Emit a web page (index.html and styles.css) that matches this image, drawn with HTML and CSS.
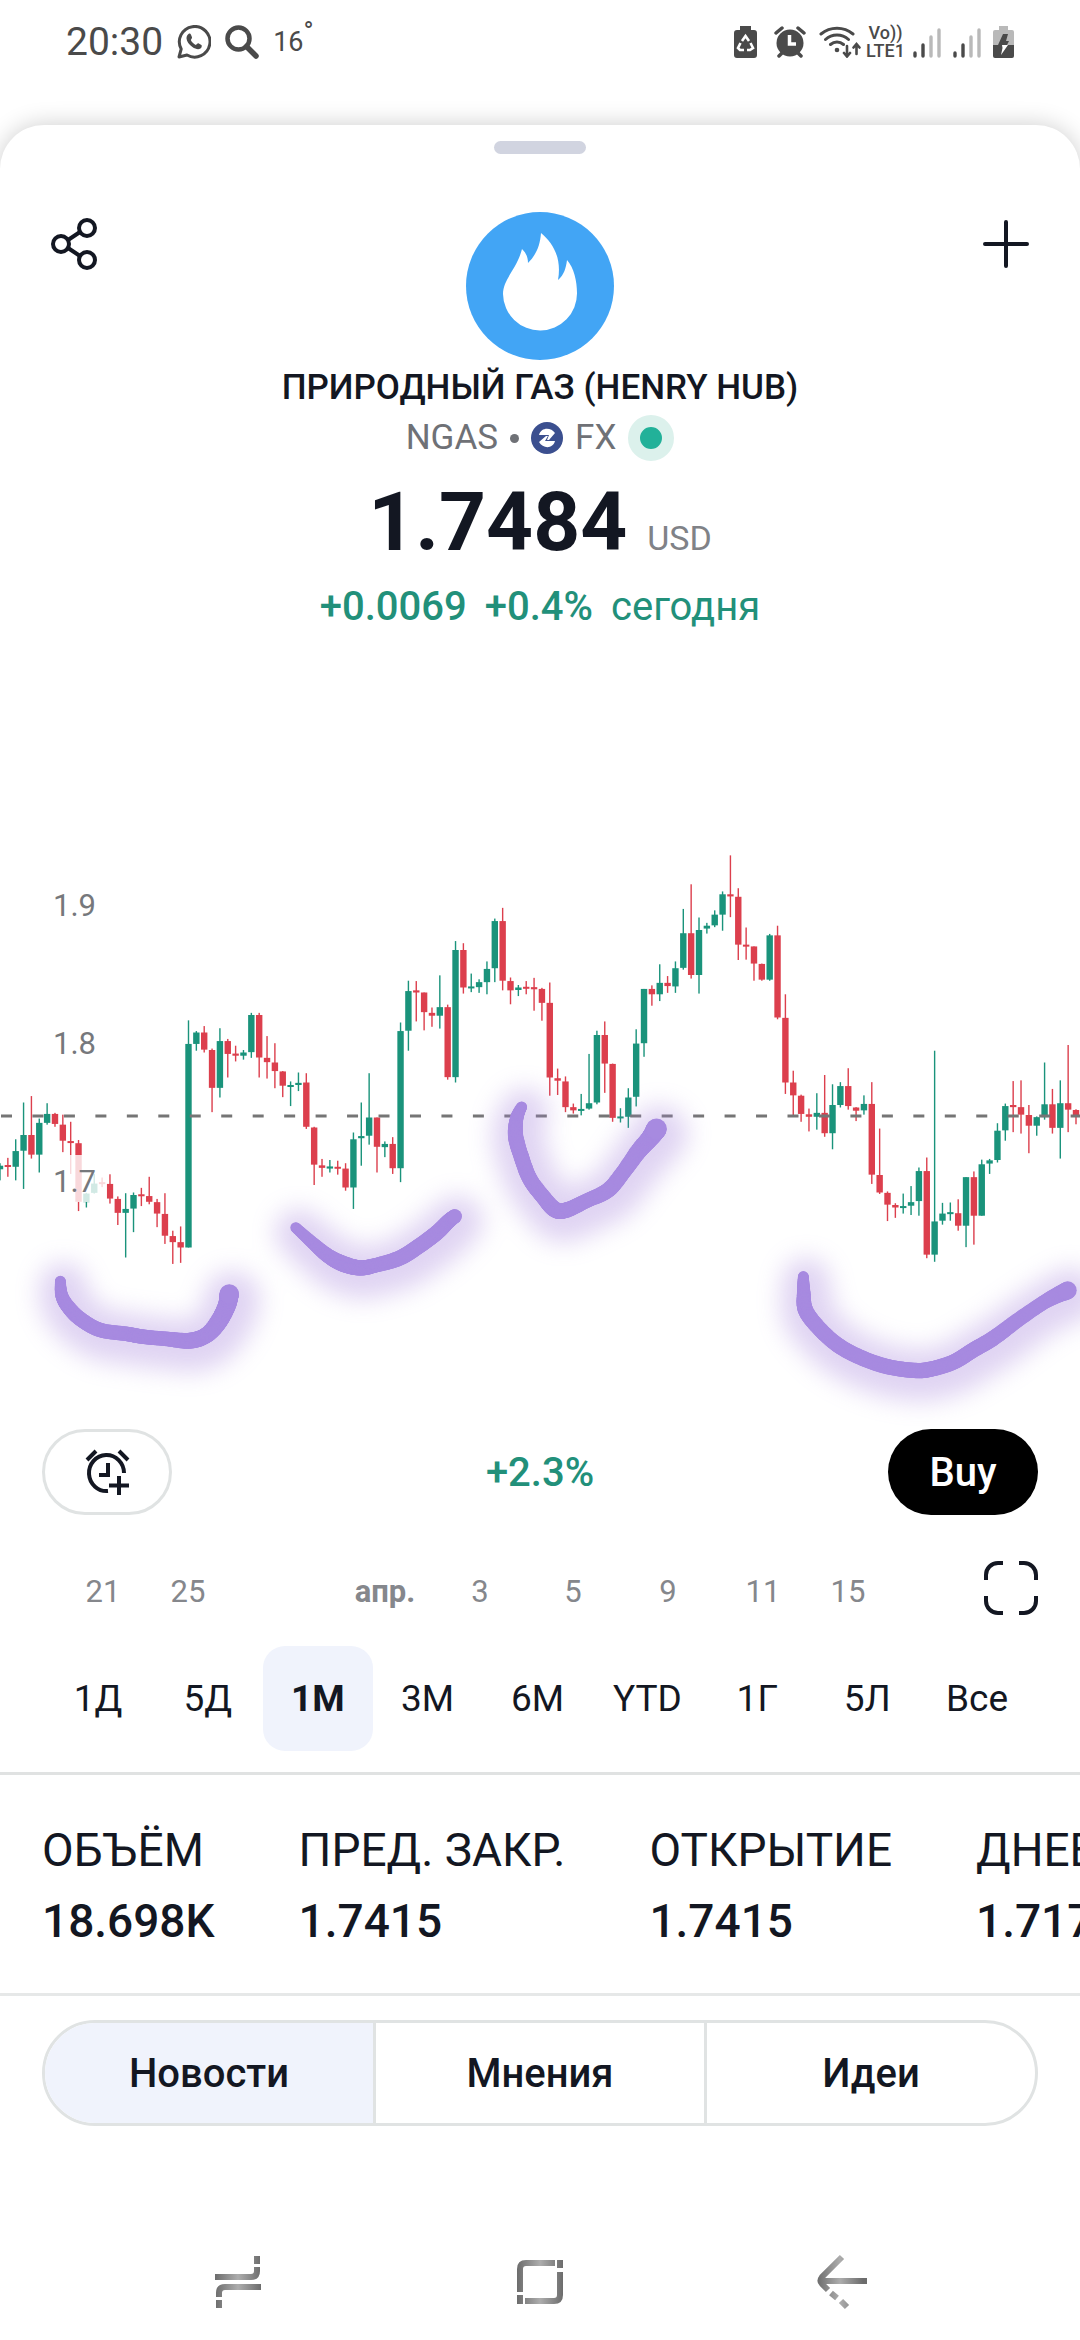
FILE: index.html
```html
<!DOCTYPE html>
<html lang="ru">
<head>
    <meta charset="UTF-8">
    <meta name="viewport" content="width=device-width, initial-scale=1.0">
    <title>NGAS 1.7484</title>
    <link rel="stylesheet" href="styles.css">
</head>
<body>
    <div class="status-bar">
        <div class="status-left">
            <span class="clock">20:30</span>
            <svg width="34" height="34" viewBox="0 0 34 34" fill="none">
                <path d="M2 32l2.200-8A15.300 15.300 0 1 1 10 30z" stroke="#4a4a4a" stroke-width="3" stroke-linejoin="round"/>
                <path d="M11.500 9c1-.8 2-.4 2.500.8l1 2.500c.3 1-1 2-1.200 2.800.8 2 2.800 4 5 4.800.9-.3 1.700-1.900 2.600-1.600l3 1.600c1 .6 0 3-1 3.700-2 1.200-5 .6-8-1.500-3.500-2.600-5.600-5.600-5.900-8.600-.1-2 .9-3.700 2-4.500z" fill="#4a4a4a"/>
            </svg>
            <svg width="34" height="34" viewBox="0 0 34 34" fill="none" stroke="#4a4a4a">
                <circle cx="13.500" cy="13.500" r="11" stroke-width="4.500"/>
                <path d="M21.500 21.500L31 31" stroke-width="5.500" stroke-linecap="round"/>
            </svg>
            <span class="temp">16<sup>°</sup></span>
        </div>
        <div class="status-right">
            <svg class="saver" width="23" height="32" viewBox="0 0 23 32">
                <path d="M6 0h11v4h3a3 3 0 0 1 3 3v22a3 3 0 0 1-3 3H3a3 3 0 0 1-3-3V7a3 3 0 0 1 3-3h3z" fill="#4a4a4a"/>
                <path d="M8 15l3.500-5 3.500 5M16.500 17l2.500 5-3 2h-3M10 24H6l-2-2 2.500-5" fill="none" stroke="#fff" stroke-width="2.600"/>
            </svg>
            <svg class="alarm" width="32" height="32" viewBox="0 0 32 32">
                <circle cx="16" cy="17" r="13.500" fill="#4a4a4a"/>
                <path d="M2 7l6-5M30 7l-6-5M5 30l4-4M27 30l-4-4" stroke="#4a4a4a" stroke-width="3.500" stroke-linecap="round"/>
                <path d="M15.500 9v9H22" fill="none" stroke="#fff" stroke-width="3.500"/>
            </svg>
            <svg class="wifi" width="42" height="32" viewBox="0 0 42 32" fill="none" stroke="#4a4a4a" stroke-width="3" stroke-linecap="round">
                <path d="M2 8a25 25 0 0 1 32 0M6.500 13.500a17 17 0 0 1 23 0M11.500 18.500a10 10 0 0 1 13 0"/>
                <circle cx="18" cy="24" r="2.300" fill="#4a4a4a" stroke="none"/>
                <path d="M28 20v10M25 27l3 3.500 3-3.500M37.500 28V18.500M34.500 21.500l3-3.500 3 3.500" stroke-width="2.600"/>
            </svg>
            <span class="volte"><span>Vo))</span><span>LTE1</span></span>
            <svg class="signal" width="28" height="32" viewBox="0 0 28 32" stroke-width="3.400" stroke-linecap="round">
                <path d="M2 27v3M10 19v11" stroke="#4a4a4a"/>
                <path d="M18 11v19M26 4v26" stroke="#b9b9b9"/>
            </svg>
            <svg class="signal" width="28" height="32" viewBox="0 0 28 32" stroke-width="3.400" stroke-linecap="round">
                <path d="M2 27v3M10 19v11" stroke="#4a4a4a"/>
                <path d="M18 11v19M26 4v26" stroke="#b9b9b9"/>
            </svg>
            <svg width="21" height="32" viewBox="0 0 21 32">
                <path d="M6 0h9v4h4a2 2 0 0 1 2 2v13H0V6a2 2 0 0 1 2-2h4z" fill="#b9b9b9"/>
                <path d="M0 19h21v11a2 2 0 0 1-2 2H2a2 2 0 0 1-2-2z" fill="#4a4a4a"/>
                <path d="M10 8h5l-2 7h3l-2 4H5z" fill="#4a4a4a"/>
                <path d="M9 19h6L8 29l1.500-7z" fill="#fff"/>
            </svg>
        </div>
    </div>

    <main class="sheet">
        <div class="handle"></div>

        <header class="sheet-header">
            <button class="icon-btn" type="button" aria-label="Поделиться">
                <svg width="46" height="52" viewBox="0 0 46 52" fill="none" stroke="#131722" stroke-width="4">
                    <circle cx="10" cy="26" r="8"/>
                    <circle cx="36" cy="10" r="8"/>
                    <circle cx="36" cy="42" r="8"/>
                    <path d="M17 22l12-8M17 30l12 8"/>
                </svg>
            </button>
            <svg class="logo" width="148" height="148" viewBox="0 0 148 148">
                <circle cx="74" cy="74" r="74" fill="#42a5f5"/>
                <path d="M75 21c12 10 21 25 17 47 6-5 8-12 9-20 7 8 10 21 10 33a37 37 0 0 1-74 1c0-15 14-25 19-45 4 4 6 8 6 14 8-8 12-17 13-30z" fill="#fff"/>
            </svg>
            <button class="icon-btn" type="button" aria-label="Добавить">
                <svg width="46" height="48" viewBox="0 0 46 48" stroke="#131722" stroke-width="4" stroke-linecap="round">
                    <path d="M23 2v44M2 24h42"/>
                </svg>
            </button>
        </header>

        <section class="quote">
            <h1>ПРИРОДНЫЙ ГАЗ (HENRY HUB)</h1>
            <div class="ticker">
                <span>NGAS</span>
                <span class="bullet"></span>
                <svg width="32" height="32" viewBox="0 0 32 32">
                    <circle cx="16" cy="16" r="16" fill="#3b4f8f"/>
                    <path d="M8 13C10 5 20 5 24 11l-6 7h-2l2-5z" fill="#fff"/>
                    <path d="M24 19C22 27 12 27 8 20l7-6h2l-3 5z" fill="#fff"/>
                </svg>
                <span>FX</span>
                <span class="market-dot"></span>
            </div>
            <div class="price">
                <strong>1.7484</strong>
                <span class="currency">USD</span>
            </div>
            <div class="change">
                <b>+0.0069</b>
                <b>+0.4%</b>
                <span>сегодня</span>
            </div>
        </section>

        <svg class="chart" id="chart" viewBox="0 0 1080 589">
            <defs>
                <filter id="glow" filterUnits="userSpaceOnUse" x="-100" y="100" width="1300" height="560">
                    <feGaussianBlur stdDeviation="12"/>
                </filter>
            </defs>
            <g id="candles"></g>
            <line class="price-line" x1="1" y1="276" x2="1080" y2="276"/>
            <rect class="label-bg" x="50" y="315" width="57" height="47"/>
            <text class="scale" x="53" y="76">1.9</text>
            <text class="scale" x="53" y="214">1.8</text>
            <text class="scale" x="53" y="352">1.7</text>
            <g id="marker-glow" filter="url(#glow)"></g>
            <g id="marker"></g>
        </svg>

        <div class="actions">
            <button class="alert-btn" type="button" aria-label="Создать оповещение">
                <svg width="45" height="46" viewBox="0 0 45 46" fill="none" stroke="#131722" stroke-width="4">
                    <path d="M23 42A17.500 18 0 1 1 39 24"/>
                    <path d="M23 14v12h-9M34 27v19M24 36.500h20M2 11l9-9M43 11l-9-9"/>
                </svg>
            </button>
            <span class="period-change">+2.3%</span>
            <button class="buy-btn" type="button">Buy</button>
        </div>

        <div class="axis-row">
            <svg class="axis" viewBox="0 0 984 54">
                <text x="103" y="41">21</text>
                <text x="188" y="41">25</text>
                <text class="month" x="385" y="41">апр.</text>
                <text x="480" y="41">3</text>
                <text x="573" y="41">5</text>
                <text x="668" y="41">9</text>
                <text x="763" y="41">11</text>
                <text x="848" y="41">15</text>
            </svg>
            <button class="fullscreen-btn" type="button" aria-label="На весь экран">
                <svg width="54" height="54" viewBox="0 0 54 54" fill="none" stroke="#131722" stroke-width="4">
                    <path d="M2 19v-5A12 12 0 0 1 14 2h5M35 2h5a12 12 0 0 1 12 12v5M52 35v5a12 12 0 0 1-12 12h-5M19 52h-5A12 12 0 0 1 2 40v-5"/>
                </svg>
            </button>
        </div>

        <div class="ranges">
            <button type="button">1Д</button>
            <button type="button">5Д</button>
            <button type="button" class="active">1М</button>
            <button type="button">3М</button>
            <button type="button">6М</button>
            <button type="button">YTD</button>
            <button type="button">1Г</button>
            <button type="button">5Л</button>
            <button type="button">Все</button>
        </div>

        <dl class="stats">
            <div class="stat"><dt>ОБЪЁМ</dt><dd>18.698K</dd></div>
            <div class="stat"><dt>ПРЕД. ЗАКР.</dt><dd>1.7415</dd></div>
            <div class="stat"><dt>ОТКРЫТИЕ</dt><dd>1.7415</dd></div>
            <div class="stat"><dt>ДНЕВНОЙ ДИАПАЗОН</dt><dd>1.7170</dd></div>
        </dl>

        <div class="tabs">
            <button type="button" class="active">Новости</button>
            <button type="button">Мнения</button>
            <button type="button">Идеи</button>
        </div>

        <nav class="nav-bar">
            <button type="button" aria-label="Последние">
                <svg width="46" height="52" viewBox="0 0 46 52" fill="none" stroke="url(#metal)" stroke-width="6">
                    <defs>
                        <linearGradient id="metal" gradientUnits="userSpaceOnUse" x1="0" y1="0" x2="46" y2="0">
                            <stop offset="0" stop-color="#6c6c6c"/>
                            <stop offset="0.500" stop-color="#adadad"/>
                            <stop offset="1" stop-color="#6c6c6c"/>
                        </linearGradient>
                    </defs>
                    <path d="M42 0v8M42 11v4q0 6-6 6H0M46 31H10q-6 0-6 6v4M4 44v8"/>
                </svg>
            </button>
            <button type="button" aria-label="Домой">
                <svg width="46" height="44" viewBox="0 0 46 44" fill="none" stroke="url(#metal)" stroke-width="6">
                    <path d="M3 32V9q0-6 6-6h29M40 3h6M43 0v8M43 12v23q0 6-6 6H8M3 35v9"/>
                </svg>
            </button>
            <button type="button" aria-label="Назад">
                <svg width="50" height="56" viewBox="0 0 50 56" fill="none" stroke="url(#metal)" stroke-width="6">
                    <path d="M25 3L5 23q-3 4 0 7l6 6M6 27h44M14 39l6 5M24 47l6 6"/>
                </svg>
            </button>
        </nav>
    </main>
    <script src="chart.js"></script>
</body>
</html>
```

FILE: styles.css
```css
* {
    margin: 0;
    padding: 0;
    box-sizing: border-box;
}

body {
    font-family: Roboto, "Noto Sans", sans-serif;
    background-color: #ffffff;
    color: #131722;
    min-height: 100vh;
    display: flex;
    flex-direction: column;
    overflow-x: hidden;
}

svg {
    display: block;
    flex-shrink: 0;
}

button {
    font-family: inherit;
    color: inherit;
    background: none;
    border: none;
    cursor: pointer;
}

/* status bar */

.status-bar {
    display: flex;
    justify-content: space-between;
    align-items: center;
    height: 84px;
    padding: 0 66px;
    color: #4a4a4a;
}

.status-left,
.status-right {
    display: flex;
    align-items: center;
}

.status-left {
    gap: 14px;
}

.clock {
    font-size: 39px;
}

.temp {
    font-size: 27px;
}

.temp sup {
    font-size: 27px;
    line-height: 0;
}

.saver {
    margin-right: 17px;
}

.alarm {
    margin-right: 13px;
}

.wifi {
    margin-right: 5px;
}

.volte {
    display: flex;
    flex-direction: column;
    align-items: center;
    width: 39px;
    margin-right: 8px;
    font-size: 18px;
    line-height: 18px;
    font-weight: 500;
}

.signal {
    margin-right: 12px;
}

/* sheet */

.sheet {
    flex: 1;
    display: flex;
    flex-direction: column;
    margin-top: 41px;
    padding-top: 16px;
    background: #ffffff;
    border-radius: 44px 44px 0 0;
    box-shadow: 0 0 24px rgba(0, 0, 0, 0.2);
}

.handle {
    width: 92px;
    height: 13px;
    margin: 0 auto;
    border-radius: 7px;
    background: #d1d4e0;
}

.sheet-header {
    display: flex;
    justify-content: space-between;
    align-items: flex-start;
    padding: 58px 42px 0;
}

.icon-btn {
    display: flex;
    align-items: center;
    justify-content: center;
    width: 64px;
    height: 64px;
}

.quote {
    display: flex;
    flex-direction: column;
    align-items: center;
}

.quote h1 {
    margin-top: 6px;
    font-size: 35px;
    line-height: 44px;
    font-weight: 500;
}

.ticker {
    display: flex;
    align-items: center;
    gap: 12px;
    margin-top: 5px;
    font-size: 35px;
    line-height: 46px;
    color: #6f7176;
}

.bullet {
    width: 9px;
    height: 9px;
    border-radius: 50%;
    background: #6f7176;
}

.market-dot {
    width: 46px;
    height: 46px;
    border: 12px solid #dcf1ec;
    border-radius: 50%;
    background: #22b199;
}

.price {
    display: flex;
    align-items: baseline;
    gap: 20px;
    margin-top: 18px;
}

.price strong {
    font-size: 82px;
    line-height: 86px;
    font-weight: 700;
}

.currency {
    font-size: 34px;
    line-height: 46px;
    color: #808287;
}

.change {
    display: flex;
    gap: 18px;
    margin-top: 18px;
    font-size: 40px;
    line-height: 48px;
    color: #22907a;
}

.change b {
    font-weight: 500;
}

/* chart */

.chart {
    width: 100%;
    margin-top: 209px;
}

.up {
    fill: #1a937b;
}

.down {
    fill: #dc3f4d;
}

.price-line {
    stroke: #757575;
    stroke-width: 3;
    stroke-dasharray: 11 20.46;
}

.label-bg {
    fill: #ffffff;
    fill-opacity: 0.8;
}

.scale {
    font-size: 31px;
    fill: #76787c;
}

#marker circle {
    fill: #a78ae0;
}

#marker-glow {
    opacity: 0.35;
}

#marker-glow circle {
    fill: #a684dc;
}

.actions {
    display: grid;
    grid-template-columns: 1fr auto 1fr;
    align-items: center;
    padding: 0 42px;
}

.alert-btn {
    display: flex;
    align-items: center;
    justify-content: center;
    width: 130px;
    height: 86px;
    border: 3px solid #e0e3e3;
    border-radius: 43px;
}

.period-change {
    font-size: 40px;
    font-weight: 500;
    color: #22907a;
}

.buy-btn {
    justify-self: end;
    width: 150px;
    height: 86px;
    border-radius: 43px;
    background: #000000;
    color: #ffffff;
    font-size: 40px;
    font-weight: 500;
}

.axis-row {
    display: flex;
    align-items: center;
    margin-top: 46px;
    padding-right: 42px;
}

.axis {
    flex: 1;
}

.axis text {
    font-size: 31px;
    fill: #85878c;
    text-anchor: middle;
}

.axis .month {
    font-weight: 700;
}

.ranges {
    display: flex;
    margin: 31px 48px 21px 43px;
}

.ranges button {
    flex: 1 1 0;
    height: 105px;
    border-radius: 22px;
    font-size: 37px;
}

.ranges .active {
    background: #f0f3fc;
    font-weight: 700;
}

/* stats and tabs */

.stats {
    display: flex;
    gap: 84px;
    padding: 47px 42px 44px;
    border-top: 3px solid #e0e2e2;
    border-bottom: 3px solid #e6e8e8;
    white-space: nowrap;
    overflow: hidden;
}

.stat {
    font-size: 46px;
    line-height: 56px;
}

.stat dd {
    margin-top: 15px;
    font-weight: 500;
}

.tabs {
    display: flex;
    margin: 24px 42px 0;
    border: 3px solid #e0e3e3;
    border-radius: 53px;
    overflow: hidden;
}

.tabs button {
    flex: 1;
    height: 100px;
    font-size: 40px;
    font-weight: 500;
}

.tabs button + button {
    border-left: 3px solid #e0e3e3;
}

.tabs .active {
    background: #f0f3fc;
}

.nav-bar {
    display: flex;
    justify-content: space-around;
    align-items: center;
    height: 116px;
    margin-top: auto;
    padding: 0 87px;
}

.nav-bar button {
    width: 100px;
    height: 100px;
    display: flex;
    align-items: center;
    justify-content: center;
}
```

FILE: chart.js
```js
const SVG_NS = 'http://www.w3.org/2000/svg';
const STEP = 7.854;
const BODY = 6.4;
const WICK = 1.4;

// data units to pixels
const toX = v => v / 3;
const toY = v => v / 2.8;

// direction, high, body top, body bottom, low
const candles = `
g 905 912 922 953|r 890 910 915 943|g 838 871 915 953|g 735 826 870 977|r 717 826 881 892
g 780 792 881 931|g 737 767 792 797|r 764 767 795 803|r 769 797 842 874|r 789 843 848 935
r 840 849 1013 1039|g 988 990 1014 1029|g 935 962 988 990|r 945 958 962 972|r 936 963 1004 1018
r 998 1005 1044 1078|g 989 1033 1044 1169|g 987 994 1032 1098|r 974 992 997 1025|r 943 997 1013 1020
r 1005 1014 1046 1084|r 989 1047 1108 1131|r 1094 1109 1126 1187|r 1082 1126 1141 1184|g 505 571 1141 1141
g 535 539 571 590|r 521 539 587 595|r 584 588 694 762|g 527 563 694 721|r 557 563 599 665
r 576 598 604 620|g 588 595 604 615|g 484 490 594 610|r 484 490 609 665|r 549 610 622 668
r 569 623 647 695|r 647 648 688 720|g 676 686 690 745|g 651 680 686 703|r 653 679 803 809
r 803 805 909 966|r 893 911 918 943|g 896 914 920 931|r 898 915 920 937|r 905 920 973 982
g 819 838 973 1033|g 735 829 835 912|g 653 777 828 853|r 777 777 859 931|g 844 851 860 888
r 832 851 919 935|g 511 535 919 958|g 394 423 534 590|r 395 421 427 508|r 427 427 482 533
r 469 484 492 523|g 379 468 492 528|r 461 468 664 671|g 283 308 664 679|r 289 308 413 430
g 374 410 415 426|g 390 398 412 428|g 340 361 398 432|g 220 227 359 398|r 190 227 394 421
r 385 395 421 460|g 406 413 420 437|r 395 411 416 432|r 386 412 418 478|r 414 417 456 506
r 399 456 665 716|r 640 667 674 714|r 662 676 748 762|r 738 748 757 766|g 711 753 758 771
g 599 737 752 755|g 534 546 735 740|r 508 546 626 708|r 626 627 778 789|g 751 774 779 791
g 695 721 775 806|g 530 570 719 746|g 417 417 569 607|r 407 417 432 464|g 348 400 432 451
r 381 400 409 428|g 340 359 410 428|g 193 261 358 363|r 124 261 378 388|g 217 252 378 430
g 232 240 248 262|g 197 209 239 244|g 144 152 209 254|r 43 152 158 216|r 135 159 293 336
r 245 293 298 335|r 298 298 346 394|r 346 347 391 394|g 263 267 391 394|r 240 267 497 502
r 432 498 679 711|r 646 679 715 770|r 713 716 767 789|r 752 768 775 816|g 709 764 775 811
r 658 764 821 831|g 684 742 821 866|g 678 689 742 749|r 639 689 745 755|r 748 749 758 787
g 715 739 757 769|r 678 739 937 963|r 808 938 987 991|r 984 988 1021 1067|r 1017 1022 1029 1058
g 990 1025 1030 1046|g 969 1014 1024 1050|g 917 927 1011 1052|r 889 927 1161 1171|g 590 1068 1161 1181
g 1016 1046 1066 1077|g 1015 1042 1047 1066|r 1006 1045 1080 1094|g 944 944 1080 1140|r 928 944 1052 1133
g 895 908 1052 1052|g 893 897 906 935|g 793 814 896 903|g 738 745 813 842|r 675 742 748 818
r 673 748 769 822|r 742 770 800 877|g 774 776 800 828|g 623 740 776 783|r 697 740 806 822
g 673 737 806 892|r 574 737 755 818|r 754 756 773 796`.trim().split(/[\n|]/);

// marker strokes: x, y, brush width
const strokes = [
    [[181, 1235, 32], [185, 1275, 38], [205, 1308, 42], [242, 1342, 44], [300, 1372, 44], [380, 1383, 44], [430, 1391, 44],
     [500, 1397, 44], [570, 1402, 48], [620, 1386, 48], [655, 1350, 52], [680, 1305, 54], [688, 1270, 58]],
    [[887, 1085, 32], [940, 1130, 38], [985, 1165, 44], [1030, 1187, 48], [1080, 1198, 46], [1130, 1190, 44],
     [1200, 1170, 46], [1260, 1135, 46], [1310, 1100, 46], [1345, 1068, 44], [1365, 1053, 42]],
    [[1565, 747, 32], [1550, 780, 40], [1547, 830, 46], [1565, 890, 46], [1590, 950, 46], [1630, 1000, 46], [1665, 1035, 48],
     [1700, 1036, 46], [1760, 1010, 44], [1825, 980, 46], [1870, 930, 46], [1915, 872, 50], [1950, 835, 54], [1970, 808, 62]],
    [[2410, 1222, 32], [2411, 1265, 40], [2416, 1315, 46], [2452, 1362, 46], [2510, 1412, 46], [2580, 1448, 46], [2660, 1474, 46],
     [2740, 1485, 46], [2790, 1482, 46], [2860, 1462, 46], [2920, 1428, 46], [2980, 1395, 46], [3060, 1340, 44],
     [3140, 1290, 44], [3205, 1260, 54]]
];

function add(parent, tag, attrs) {
    const el = document.createElementNS(SVG_NS, tag);
    for (const key in attrs) el.setAttribute(key, attrs[key]);
    parent.appendChild(el);
}

const candleGroup = document.getElementById('candles');
candles.forEach((row, i) => {
    const [dir, ...values] = row.split(' ');
    const [high, top, bottom, low] = values.map(toY);
    const cls = dir === 'g' ? 'up' : 'down';
    const x = i * STEP;
    add(candleGroup, 'rect', { class: cls, x: x - WICK / 2, y: high, width: WICK, height: low - high });
    add(candleGroup, 'rect', { class: cls, x: x - BODY / 2, y: top, width: BODY, height: Math.max(bottom - top, 2) });
});

// Catmull-Rom between b and c
function spline(a, b, c, d, t) {
    return 0.5 * (2 * b + (c - a) * t + (2 * a - 5 * b + 4 * c - d) * t * t + (3 * b - a - 3 * c + d) * t * t * t);
}

const marker = document.getElementById('marker');
const glow = document.getElementById('marker-glow');
strokes.forEach(points => {
    for (let i = 1; i < points.length; i++) {
        const a = points[Math.max(i - 2, 0)];
        const b = points[i - 1];
        const c = points[i];
        const d = points[Math.min(i + 1, points.length - 1)];
        for (let t = 0; t <= 1; t += 0.05) {
            const [x, y, w] = [0, 1, 2].map(n => spline(a[n], b[n], c[n], d[n], t));
            add(marker, 'circle', { cx: toX(x), cy: toY(y), r: w / 6 });
            add(glow, 'circle', { cx: toX(x) + 3, cy: toY(y) + 5, r: w / 6 + 18 });
        }
    }
});
```
